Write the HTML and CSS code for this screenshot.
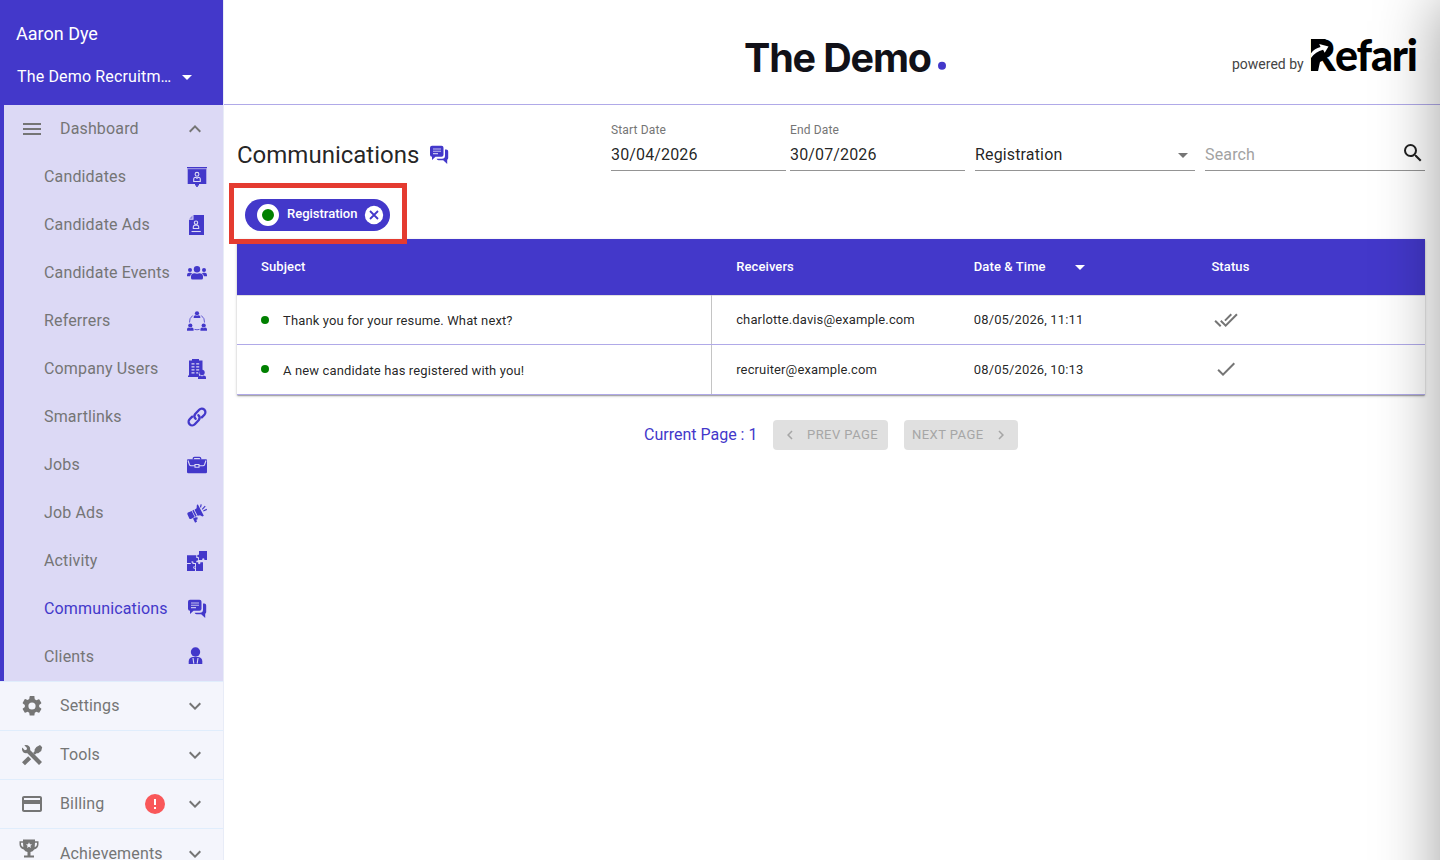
FILE: index.html
```html
<!DOCTYPE html>
<html lang="en">
<head>
    <meta charset="UTF-8">
    <meta name="viewport" content="width=device-width, initial-scale=1.0">
    <title>Communications</title>
    <link rel="stylesheet" href="styles.css">
</head>
<body>

    <!-- shared icons -->
    <svg class="sprite">
        <symbol id="chat" viewBox="0 0 20 20">
            <path d="M16 4.500h1.200a2 2 0 0 1 2 2v6.500a2 2 0 0 1-1 1.700v4.300l-4-3.700H9.500a2 2 0 0 1-1.900-1.500h5.400a3 3 0 0 0 3-3z"/>
            <path d="M3 .800h9.500a2 2 0 0 1 2 2v7a2 2 0 0 1-2 2H6.500L3 15v-3.200a2 2 0 0 1-2-2v-7a2 2 0 0 1 2-2z"/>
            <path d="M4 4h8M4 6.300h8M4 8.600h5" stroke="#c5c0ee" stroke-width="1.100"/>
        </symbol>
        <symbol id="down" viewBox="0 0 24 24"><path d="M7.410 8.590 12 13.170l4.590-4.580L18 10l-6 6-6-6z"/></symbol>
        <symbol id="drop" viewBox="0 0 24 24"><path d="m7 10 5 5 5-5z"/></symbol>
    </svg>

    <div class="layout">
        <!-- sidebar -->
        <aside class="sidebar">
            <div class="account">
                <div class="user">Aaron Dye</div>
                <div class="company"><span>The Demo Recruitm…</span><svg class="icon"><use href="#drop"/></svg></div>
            </div>

            <nav class="dashboard">
                <div class="row">
                    <svg class="icon" viewBox="0 0 24 24"><path d="M3 18h18v-2H3zm0-5h18v-2H3zm0-7v2h18V6z"/></svg>
                    <span class="label">Dashboard</span>
                    <svg class="icon" viewBox="0 0 24 24"><path d="m12 8-6 6 1.410 1.410L12 10.830l4.590 4.580L18 14z"/></svg>
                </div>
                <div class="row sub"><span class="label">Candidates</span>
                    <svg class="pic" viewBox="0 0 20 20"><path d="M0 0h20v1.300H0zM.700 2h18.600v15H.700zM8 17h4v1.500H8zM9.200 18h1.600v2H9.200z"/><path d="M.700 1.300h18.600v1H.700z" fill="#8b83dd"/><circle cx="10" cy="7.300" r="1.900" class="line"/><path d="M6.700 14.500v-2.300a2 2 0 0 1 2-2l1.300 1 1.300-1a2 2 0 0 1 2 2v2.300z" class="line"/></svg></div>
                <div class="row sub"><span class="label">Candidate Ads</span>
                    <svg class="pic" viewBox="0 0 20 20"><path d="M6.500 0H17v20H2V4.800h4.500z"/><path d="m2.300 3.700 3.200-3.200v3.200z" fill="#8b83dd"/><circle cx="9" cy="7.700" r="1.700" class="line"/><path d="M6.300 13.500v-1.700a2 2 0 0 1 2-1.700h1.400a2 2 0 0 1 2 1.700v1.700z" class="line"/><path d="M4.500 16.500h9.300" class="line"/></svg></div>
                <div class="row sub"><span class="label">Candidate Events</span>
                    <svg class="pic" viewBox="0 0 20 20"><circle cx="10" cy="6.300" r="3.200"/><circle cx="3" cy="7" r="2"/><circle cx="17" cy="7" r="2"/><path d="M4 15v-1.500a3.500 3.500 0 0 1 3.500-3.300l2.500.500 2.500-.500a3.500 3.500 0 0 1 3.500 3.300V15q0 1.500-1.500 1.500h-9Q4 16.500 4 15zM0 12q0-2.300 2.300-2.300h1.200q1 0 1.600.5-1.600 1-2 3.100H0zM20 12q0-2.300-2.300-2.300h-1.200q-1 0-1.600.5 1.600 1 2 3.100H20z"/></svg></div>
                <div class="row sub"><span class="label">Referrers</span>
                    <svg class="pic" viewBox="0 0 20 20"><circle cx="10" cy="2.300" r="2.100"/><path d="M6.700 7V5.800q0-1.600 1.900-1.600L10 5l1.400-.8q1.900 0 1.900 1.600V7z"/><circle cx="3.300" cy="14.500" r="2.100"/><path d="M0 19.800v-1.500q0-1.800 1.900-1.800l1.400.700 1.400-.700q1.900 0 1.900 1.800v1.500z"/><circle cx="16.700" cy="14.500" r="2.100"/><path d="M13.400 19.800v-1.500q0-1.800 1.900-1.800l1.400.700 1.400-.700q1.900 0 1.900 1.800v1.500z"/><path d="M5.700 4.500Q2 7.300 2.500 11.500M14.300 4.500Q18 7.300 17.500 11.500M7.500 18.400q2.500.700 5 0" class="arc"/></svg></div>
                <div class="row sub"><span class="label">Company Users</span>
                    <svg class="pic" viewBox="0 0 20 20"><path fill-rule="evenodd" d="M5 0h7v1.500h3.500V12H14a3 3 0 0 0-2 4v2H1v-1.500h1v-15h3zM4.500 4.200v1.200h3V4.200zm4.700 0v1.200h3V4.200zm-4.700 3v1.200h3V7.200zm4.700 0v1.200h3V7.200zm-4.700 3v1.200h3v-1.200zm4.700 0v1.200h3v-1.200zm-4.700 3v1.200h3v-1.200zm4.700 0v1.200h2v-1.200z"/><circle cx="15" cy="13.500" r="2.700"/><path d="M11 20v-1.300q0-2.200 2.700-2.200l1.300.900 1.300-.900q2.700 0 2.700 2.200V20z"/></svg></div>
                <div class="row sub"><span class="label">Smartlinks</span>
                    <svg class="pic" viewBox="0 0 20 20"><g fill="none" stroke="#4338ca" stroke-width="2.300" stroke-linecap="round"><path d="M8.700 11.800a3.500 3.500 0 0 1-.500-4.800l4-4.300a3.600 3.600 0 0 1 5.200 5l-2.600 2.700"/><path d="M11.300 8.200a3.500 3.500 0 0 1 .5 4.800l-4 4.300a3.600 3.600 0 0 1-5.200-5l2.600-2.700"/></g></svg></div>
                <div class="row sub"><span class="label">Jobs</span>
                    <svg class="pic" viewBox="0 0 20 20"><path d="M6.300 4.500V3.600q0-1.300 1.300-1.300h4.800q1.300 0 1.300 1.300v.9" fill="none" stroke="#4338ca" stroke-width="1.300"/><path d="M1 4.300h18q1 0 1 1V17q0 1.300-1.300 1.300H1.300Q0 18.300 0 17V5.300q0-1 1-1z"/><path d="M1 5.500 2.500 9.800q.4 1 1.500 1h4M19 5.500l-1.500 4.300q-.4 1-1.500 1h-4M8 9.500h4v2.800H8z" class="line"/></svg></div>
                <div class="row sub"><span class="label">Job Ads</span>
                    <svg class="pic" viewBox="0 0 20 20"><path d="m10.800 1.200 6 11.600-1.400.6-2.300-1.200-2.500.5-3.100-6 2.100-1.400.2-3zM6.600 6.800l3.100 6.200-1.300.7-3.100-6zM1 9.400l3.700-1.500 3 6.100L4 15.900q-1.200.5-1.800-.7L.5 11.500q-.5-1.400.5-2.100zM6 15.500l2.700-1.300 2 .3-.3 1.900-1.200.3.900 1.900-2 1.100z"/><path d="m13.500 4.400.7-3M15.200 6.300l3-3.200M16.300 8l3.500-1.600" stroke="#4338ca" stroke-width="1.200"/></svg></div>
                <div class="row sub"><span class="label">Activity</span>
                    <svg class="pic" viewBox="0 0 20 20"><path d="M12 0h8v9h-2.600q.4-1.800-1.100-1.800T15.200 9H12V6.200q-1.800.4-1.800-1.200T12 3.800z"/><path d="M0 4.200h9.300V7q2-.5 2 1.300T9.300 9.700V12H6.500q.4-1.800-1.200-1.800T4.100 12H0zM0 13h3q-.5-1.800 1.200-1.800T5.500 13H8v2.300q-1.800-.4-1.800 1.200T8 17.800V20H0zM9 11.200h2.200q-.4 2 1 2t1.200-2H16V20H9v-3q-1.800.3-1.800-.8T9 15.500z"/><path d="M0 12.500h4M8.500 14v6" stroke="#dcd9f5" stroke-width=".8"/></svg></div>
                <div class="row sub active"><span class="label">Communications</span>
                    <svg class="pic"><use href="#chat"/></svg></div>
                <div class="row sub"><span class="label">Clients</span>
                    <svg class="pic" viewBox="0 0 20 20"><circle cx="8.500" cy="5" r="4.700"/><path d="M1.700 17v-2.500q0-4 4-4.500h5.600q4 .500 4 4.500V17z"/><path d="m6 11 .8 5.700M11 11l-.8 5.700" class="line"/></svg></div>
            </nav>

            <nav>
                <div class="row section">
                    <svg class="icon" viewBox="0 0 24 24"><path d="M19.140 12.940c.04-.3.060-.61.060-.94s-.020-.64-.070-.94l2.030-1.580a.49.490 0 0 0 .12-.61l-1.920-3.320a.49.490 0 0 0-.59-.22l-2.390.96a7 7 0 0 0-1.620-.94l-.36-2.540A.48.480 0 0 0 13.920 2h-3.840a.48.480 0 0 0-.47.410l-.36 2.540c-.59.240-1.130.57-1.620.94l-2.390-.96a.48.480 0 0 0-.59.220L2.740 8.870a.48.480 0 0 0 .12.610l2.030 1.580a6 6 0 0 0 0 1.880l-2.030 1.580a.49.490 0 0 0-.12.610l1.920 3.320c.12.220.37.290.59.220l2.390-.96c.5.380 1.030.7 1.620.94l.36 2.540c.05.240.24.410.48.410h3.840c.24 0 .44-.17.470-.41l.36-2.540a7 7 0 0 0 1.620-.94l2.390.96c.22.080.47 0 .59-.22l1.920-3.320a.48.480 0 0 0-.12-.61zM12 15.600A3.600 3.600 0 1 1 12 8.400a3.600 3.600 0 0 1 0 7.200z"/></svg>
                    <span class="label">Settings</span>
                    <svg class="icon"><use href="#down"/></svg>
                </div>
                <div class="row section">
                    <svg class="icon" viewBox="0 0 24 24"><path d="M4.300 2.300 7 5l-.4 1.800L4.800 7.200 2.200 4.600Q1.400 7.800 3.500 9.400q1.600 1.200 3.600.6L19 22l3-3L10.100 7.100q.5-2.300-1-3.800Q7.200 1.500 4.300 2.300z"/><path d="m8.200 13.200 3 3L5 22.200l-3-3zM20 2l2.200 2.200-1 3.800-3 2.300h-1.600l-1.800 1.500-1.700-1.700 1.500-1.800V6.600L16.400 4z"/></svg>
                    <span class="label">Tools</span>
                    <svg class="icon"><use href="#down"/></svg>
                </div>
                <div class="row section">
                    <svg class="icon" viewBox="0 0 24 24"><path d="M20 4H4c-1.110 0-1.990.89-1.990 2L2 18c0 1.110.89 2 2 2h16c1.110 0 2-.89 2-2V6c0-1.110-.89-2-2-2zm0 14H4v-6h16zm0-10H4V6h16z"/></svg>
                    <span class="label">Billing</span>
                    <svg class="alert" viewBox="0 0 20 20"><circle cx="10" cy="10" r="10"/><path d="M9 5h2v6H9zM9 13h2v2H9z" fill="#fff"/></svg>
                    <svg class="icon"><use href="#down"/></svg>
                </div>
                <div class="row section last">
                    <svg class="icon trophy" viewBox="0 0 24 24"><path fill-rule="evenodd" d="M6 2.500h12v1.700h3.500v3q0 4-4.300 5.300-1.200 2-3.700 2.600v3.400H17v2H7v-2h3.500v-3.400Q8 14.500 6.800 12.500 2.500 11.200 2.500 7.200v-3H6zM4 5.700v1.500q0 2 2.300 3L6 5.700zm16 0h-2l-.3 4.500q2.300-1 2.300-3zM12 5.200l-.9 2-2.200.2 1.700 1.400-.5 2.100 1.900-1.100 1.900 1.100-.5-2.100 1.700-1.400-2.200-.2z"/></svg>
                    <span class="label">Achievements</span>
                    <svg class="icon"><use href="#down"/></svg>
                </div>
            </nav>
        </aside>

        <main class="main">
            <!-- logos -->
            <header class="topbar">
                <svg class="demo-logo" width="210" height="60" viewBox="0 0 210 60">
                    <text x="2" y="47" textLength="188" class="demo-text">The Demo</text>
                    <circle cx="200" cy="40.700" r="4" fill="#4338ca"/>
                </svg>
                <div class="powered">
                    <span>powered by</span>
                    <svg class="refari-logo" width="110" height="60" viewBox="0 -10 110 60">
                        <text x="-2" y="36" class="refari-text">R</text>
                        <text x="25" y="36" textLength="83" class="refari-text">efari</text>
                        <path d="M1 4h14l5 5v10l-6 6-4 2-2 9H1z"/>
                        <path d="M1 18.300Q4.500 13.500 10.500 12l-1.300-3 9.300 2.500-3.800 6.200-1.600-2.900Q5.500 16.500 1 23z" fill="#fff"/>
                    </svg>
                </div>
            </header>

            <div class="content">
                <!-- title and filters -->
                <div class="toolbar">
                    <h1>Communications<svg class="pic"><use href="#chat"/></svg></h1>
                    <div class="field date"><label>Start Date</label><span>30/04/2026</span></div>
                    <div class="field date second"><label>End Date</label><span>30/07/2026</span></div>
                    <div class="field select"><span>Registration</span><svg class="icon"><use href="#drop"/></svg></div>
                    <div class="field search"><span>Search</span><svg class="icon" viewBox="0 0 24 24"><path d="M15.500 14h-.79l-.28-.27A6.470 6.470 0 0 0 16 9.500 6.500 6.500 0 1 0 9.500 16c1.610 0 3.090-.59 4.230-1.570l.27.280v.79l5 4.990L20.490 19zm-6 0C7.010 14 5 11.990 5 9.500S7.010 5 9.500 5 14 7.010 14 9.500 11.990 14 9.500 14z"/></svg></div>
                </div>

                <div class="chips">
                    <div class="chip">
                        <span class="badge"></span>
                        <span class="chip-label">Registration</span>
                        <svg class="close" viewBox="0 0 20 20"><circle cx="10" cy="10" r="9.200" fill="#fff"/><path d="m6 6 8 8m0-8-8 8" stroke="#4338ca" stroke-width="1.800"/></svg>
                    </div>
                    <div class="highlight"></div>
                </div>

                <div class="table">
                    <div class="tr head">
                        <div>Subject</div><div>Receivers</div>
                        <div>Date &amp; Time<svg class="icon"><use href="#drop"/></svg></div><div>Status</div>
                    </div>
                    <div class="tr">
                        <div class="subject"><i class="dot"></i><span>Thank you for your resume. What next?</span></div>
                        <div>charlotte.davis@example.com</div>
                        <div>08/05/2026, 11:11</div>
                        <div><svg class="icon check" viewBox="0 0 24 24"><path d="m18 7-1.410-1.410-6.340 6.340 1.410 1.410zm4.240-1.410L11.660 16.170 7.480 12l-1.410 1.410L11.660 19l12-12zM.410 13.410 6 19l1.410-1.410L1.830 12z"/></svg></div>
                    </div>
                    <div class="tr">
                        <div class="subject"><i class="dot"></i><span>A new candidate has registered with you!</span></div>
                        <div>recruiter@example.com</div>
                        <div>08/05/2026, 10:13</div>
                        <div><svg class="icon check" viewBox="0 0 24 24"><path d="M9 16.170 4.830 12l-1.420 1.410L9 19 21 7l-1.410-1.410z"/></svg></div>
                    </div>
                </div>

                <div class="pager">
                    <span>Current Page : 1</span>
                    <button disabled><svg viewBox="0 0 24 24"><path d="M15.410 7.410 14 6l-6 6 6 6 1.410-1.410L10.830 12z"/></svg>PREV PAGE</button>
                    <button disabled>NEXT PAGE<svg viewBox="0 0 24 24"><path d="M10 6 8.590 7.410 13.170 12l-4.580 4.590L10 18l6-6z"/></svg></button>
                </div>
            </div>
        </main>
    </div>

    <!-- closed drawer, only its shadow reaches the page -->
    <div class="drawer"></div>

</body>
</html>
```
FILE: styles.css
```css
* {
    box-sizing: border-box;
}

body {
    margin: 0;
    height: 100vh;
    overflow: hidden;
    font-family: Roboto, sans-serif;
    font-size: 16px;
    color: rgba(0, 0, 0, 0.87);
    background: #fff;
}

.sprite {
    display: none;
}

svg {
    flex-shrink: 0;
}

.icon {
    width: 24px;
    height: 24px;
    fill: currentColor;
}

.pic {
    width: 20px;
    height: 20px;
    fill: #4338ca;
}

.line {
    fill: none;
    stroke: #dcd9f5;
    stroke-width: 1.1;
}

.arc {
    fill: none;
    stroke: #4338ca;
    stroke-width: 0.8;
}

.layout {
    display: flex;
    height: 100vh;
}

/* sidebar */
.sidebar {
    width: 224px;
    flex-shrink: 0;
    overflow: hidden;
    background: #f4f5fc;
    border-right: 1px solid #e8ecf7;
}

.account {
    height: 105px;
    padding: 22px 16px 0;
    background: #4338ca;
    color: #fff;
    font-size: 18px;
    line-height: 24px;
}

.company {
    display: flex;
    align-items: center;
    margin-top: 19px;
    padding-left: 1px;
    font-size: 16px;
    letter-spacing: 0.15px;
}

.company span {
    width: 158px;
}

.dashboard {
    border-left: 4px solid #4338ca;
    background: #dcd9f5;
}

.row {
    display: flex;
    align-items: center;
    height: 48px;
    padding: 0 16px;
    color: #757575;
    letter-spacing: 0.15px;
}

.label {
    flex: 1;
    line-height: 24px;
    margin-top: -1px;
    white-space: nowrap;
}

.icon + .label {
    margin-left: 16px;
}

.sub {
    padding-left: 40px;
}

.active {
    color: #4338ca;
}

.section {
    height: 49px;
    padding-left: 20px;
    border-top: 1px solid #e0edfc;
}

.last {
    height: 51px;
}

.alert {
    width: 20px;
    height: 20px;
    margin-right: 18px;
    fill: #f95759;
}

.trophy {
    margin: -10px 3px 0 -3px;
}

/* main */
.main {
    flex: 1;
}

.topbar {
    display: flex;
    justify-content: flex-end;
    height: 105px;
    border-bottom: 1px solid #b0a9e8;
}

.demo-logo {
    margin: 25px 279px 0 0;
}

.demo-text {
    font: 700 39.5px Inter, sans-serif;
    fill: #111118;
}

.powered {
    display: flex;
    width: 209px;
    padding-top: 25px;
    font-size: 14px;
    color: #444;
}

.powered span {
    width: 79px;
    padding: 31px 0 0 1px;
}

.refari-logo {
    overflow: visible;
}

.refari-text {
    font: 900 43px Lato, sans-serif;
}

.content {
    padding: 15px 15px 0 13px;
}

.toolbar {
    display: flex;
    height: 51px;
}

h1 {
    display: flex;
    align-items: center;
    gap: 10px;
    width: 374px;
    height: 36px;
    margin: 17px 0 0;
    font-size: 24px;
    font-weight: 400;
}

.field {
    display: flex;
    justify-content: space-between;
    align-items: flex-end;
    width: 220px;
    padding-bottom: 3px;
    border-bottom: 1px solid #949494;
    line-height: 24px;
    letter-spacing: 0.15px;
    margin-left: 10px;
}

.date {
    flex-direction: column;
    justify-content: flex-end;
    align-items: flex-start;
    width: 175px;
    margin-left: 0;
}

.date label {
    font-size: 12px;
    line-height: 16px;
    margin-bottom: 5px;
    color: #757575;
}

.second {
    margin-left: 4px;
}

.select .icon {
    color: #757575;
}

.search span {
    color: #a2a2a2;
}

.search .icon {
    margin-bottom: 2px;
}

.chips {
    position: relative;
    height: 68px;
    padding: 28px 8px 0;
}

.chip {
    display: flex;
    align-items: center;
    width: 145px;
    height: 32px;
    padding-left: 12px;
    border-radius: 16px;
    background: #4338ca;
    color: #fff;
    font-size: 13px;
}

.badge {
    width: 22px;
    height: 22px;
    border: 5px solid #fff;
    border-radius: 50%;
    background: green;
}

.chip-label {
    width: 85px;
    padding: 0 0 3px 8px;
    font-weight: 500;
}

.close {
    width: 20px;
    height: 20px;
}

/* red frame around the active filter */
.highlight {
    position: absolute;
    left: -8px;
    top: 12px;
    width: 178px;
    height: 61px;
    border: 5px solid #e43b30;
    z-index: 2;
}

.table {
    width: 1188px;
    font-size: 13px;
    letter-spacing: 0.13px;
    box-shadow: 0 1px 3px rgba(0, 0, 0, 0.2), 0 2px 1px -1px rgba(0, 0, 0, 0.12), 0 1px 1px rgba(0, 0, 0, 0.14);
}

.tr {
    display: grid;
    grid-template-columns: 40% 20% 20% 20%;
    height: 50px;
    border-bottom: 1px solid #b0a9e8;
}

.tr > div {
    display: flex;
    align-items: center;
    padding-left: 24px;
}

.tr:last-child > div {
    padding-bottom: 1px;
}

.tr .subject {
    border-right: 1px solid #c4c4c4;
    padding-top: 2px;
}

.tr:last-child .subject {
    padding-bottom: 0;
}

.head {
    height: 56px;
    border-color: #e0e0e0;
    border-bottom: 0;
    background: #4338ca;
    color: #fff;
    font-weight: 500;
    letter-spacing: 0.1px;
}

.head > div {
    padding-bottom: 1px;
}

.head .icon {
    margin: 1px 0 0 22px;
}

.head + .tr {
    box-shadow: inset 0 1px #e0e0e0;
}

.dot {
    width: 8px;
    height: 8px;
    margin: -2px 14px 0 0;
    border-radius: 50%;
    background: green;
}

.tr:last-child .dot {
    margin-top: -3px;
}

.check {
    color: #757575;
    margin-left: 3px;
}

.pager {
    display: flex;
    align-items: center;
    gap: 16px;
    margin: 25px 0 0 407px;
    color: #4338ca;
}

.pager span {
    width: 113px;
    padding-bottom: 2px;
    white-space: nowrap;
}

.pager button {
    display: flex;
    align-items: center;
    gap: 8px;
    width: 115px;
    height: 30px;
    padding: 0 8px 1px;
    border: 0;
    border-radius: 4px;
    background: #e0e0e0;
    color: #a6a6a6;
    font-family: inherit;
    font-size: 13px;
    letter-spacing: 0.45px;
    white-space: nowrap;
}

.pager button:last-child {
    width: 114px;
}

.pager svg {
    width: 18px;
    height: 18px;
    margin-top: 1px;
    fill: currentColor;
}

.drawer {
    position: fixed;
    top: 0;
    left: 100%;
    width: 400px;
    height: 120vh;
    box-shadow: 0 0 60px rgba(0, 0, 0, 0.38);
    z-index: 10;
}
```
